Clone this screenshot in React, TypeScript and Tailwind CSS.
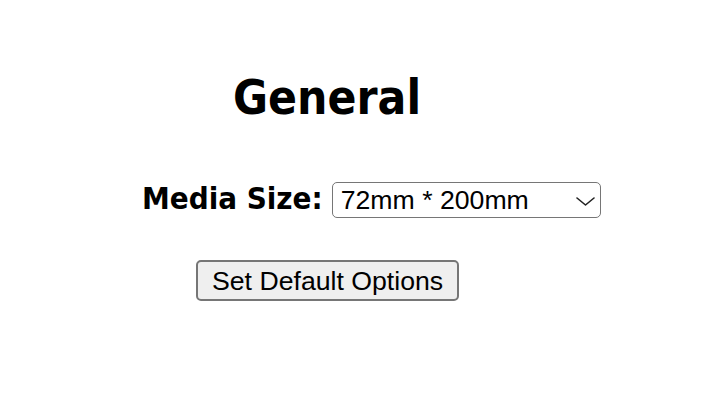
import { useState } from "react";

const MEDIA_SIZES = ["72mm * 200mm", "72mm * 100mm", "58mm * 200mm", "58mm * 100mm"];

export default function App() {
  const [media, setMedia] = useState(MEDIA_SIZES[0]);

  return (
    <div className="w-[708px] h-[400px] bg-white text-black">
      {/* Section title */}
      <h2 className="pl-[233px] pt-[70px] text-[47.5px] leading-[56px] font-bold font-['DejaVu_Sans_Condensed','DejaVu_Sans',sans-serif]">
        General
      </h2>

      {/* Media size row */}
      <div className="flex items-start pl-[142px] mt-[56px]">
        <label
          htmlFor="media"
          className="text-[31px] leading-[33px] font-bold font-['DejaVu_Sans_Condensed','DejaVu_Sans',sans-serif]"
        >
          Media Size:
        </label>
        <div className="relative ml-[9px]">
          <select
            id="media"
            value={media}
            onChange={(e) => setMedia(e.target.value)}
            className="appearance-none w-[269px] h-[36px] pl-[8px] pr-[40px] border-[1.5px] border-[#767676] rounded-[5px] bg-white text-[26.67px] leading-[30px] font-['Liberation_Sans',Arial,sans-serif] outline-none"
          >
            {MEDIA_SIZES.map((size) => (
              <option key={size} value={size}>
                {size}
              </option>
            ))}
          </select>
          <svg
            className="absolute left-[244px] top-[15px] pointer-events-none"
            width="19"
            height="9"
            viewBox="0 0 19 9"
            fill="none"
          >
            <polyline points="1,1 9.5,8 18,1" stroke="#222" strokeWidth="1.6" strokeLinecap="round" strokeLinejoin="round" />
          </svg>
        </div>
      </div>

      {/* Submit */}
      <div className="pl-[196px] mt-[42px]">
        <button className="h-[41px] px-[14px] border-2 border-[#767676] rounded-[5px] bg-[#efefef] text-[26.67px] leading-[30px] font-['Liberation_Sans',Arial,sans-serif]">
          Set Default Options
        </button>
      </div>
    </div>
  );
}
